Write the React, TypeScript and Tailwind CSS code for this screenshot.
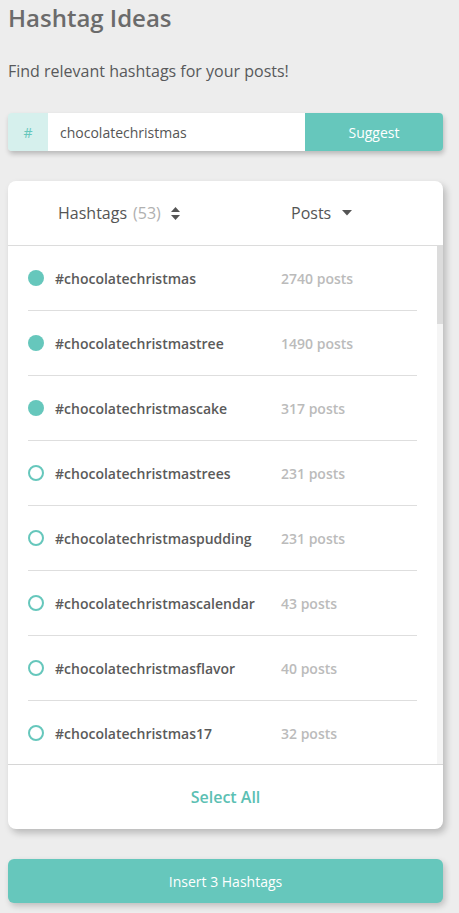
import * as React from "react";

type Tag = { name: string; posts: number; selected: boolean };

const known: Tag[] = [
  { name: "chocolatechristmas", posts: 2740, selected: true },
  { name: "chocolatechristmastree", posts: 1490, selected: true },
  { name: "chocolatechristmascake", posts: 317, selected: true },
  { name: "chocolatechristmastrees", posts: 231, selected: false },
  { name: "chocolatechristmaspudding", posts: 231, selected: false },
  { name: "chocolatechristmascalendar", posts: 43, selected: false },
  { name: "chocolatechristmasflavor", posts: 40, selected: false },
  { name: "chocolatechristmas17", posts: 32, selected: false },
];

const extra = [
  "chocolatechristmascookies", "chocolatechristmaslog", "chocolatechristmasgifts",
  "chocolatechristmasbox", "chocolatechristmasbark", "chocolatechristmastruffles",
  "chocolatechristmasdessert", "chocolatechristmasparty", "chocolatechristmascandy",
  "chocolatechristmaseve", "chocolatechristmasmorning", "chocolatechristmasfudge",
  "chocolatechristmassantas", "chocolatechristmasgift", "chocolatechristmasbaking",
  "chocolatechristmasmarket", "chocolatechristmaspud", "chocolatechristmastreat",
  "chocolatechristmastreats", "chocolatechristmasstar", "chocolatechristmasball",
  "chocolatechristmasballs", "chocolatechristmasbauble", "chocolatechristmaswreath",
  "chocolatechristmashouse", "chocolatechristmasdecor", "chocolatechristmasday",
  "chocolatechristmasnight", "chocolatechristmascupcake", "chocolatechristmascupcakes",
  "chocolatechristmasmousse", "chocolatechristmastart", "chocolatechristmaspie",
  "chocolatechristmaspresent", "chocolatechristmasstocking", "chocolatechristmaswish",
  "chocolatechristmaslove", "chocolatechristmasfun", "chocolatechristmas2017",
  "chocolatechristmasjoy", "chocolatechristmascheer", "chocolatechristmasmagic",
  "chocolatechristmassweets", "chocolatechristmasdrink", "chocolatechristmascocoa",
];

const tags: Tag[] = [
  ...known,
  ...extra.map((name, i) => ({ name, posts: Math.max(1, 30 - i), selected: false })),
];

function SortIcon() {
  return (
    <svg width="9" height="13" viewBox="0 0 9 13" className="ml-[10px]">
      <path d="M4.5 0 L9 5 H0 Z" fill="#555" />
      <path d="M4.5 13 L9 8 H0 Z" fill="#555" />
    </svg>
  );
}

function CaretDown() {
  return (
    <svg width="10" height="6" viewBox="0 0 10 6" className="ml-[11px]">
      <path d="M0 0 H10 L5 5.5 Z" fill="#555" />
    </svg>
  );
}

export default function App() {
  return (
    <div
      className="min-h-[913px] w-full bg-[#ededed] pl-2 pr-4 pb-4 text-[#555]"
      style={{ fontFamily: '"Open Sans", "Liberation Sans", sans-serif' }}
    >
      <h1 className="pt-[2px] text-[24px] font-semibold leading-[32px] text-[#6b6b6b]">
        Hashtag Ideas
      </h1>
      <p className="mt-[25px] text-[16px] leading-[24px] text-[#58595b]">
        Find relevant hashtags for your posts!
      </p>

      <div className="mt-[30px] flex h-[38px] overflow-hidden rounded-[4px] shadow-[1px_3px_5px_rgba(0,0,0,0.22)]">
        <div className="flex w-[40px] items-center justify-center bg-[#d6f0ed] text-[14px] text-[#66c7bc]">
          #
        </div>
        <div className="flex flex-1 items-center bg-white pl-3 text-[14px] text-[#555]">
          chocolatechristmas
        </div>
        <button className="w-[138px] bg-[#66c7bc] text-[14px] text-white">Suggest</button>
      </div>

      <div className="mt-[30px] overflow-hidden rounded-[8px] bg-white shadow-[3px_4px_7px_rgba(0,0,0,0.22)]">
        <div className="flex h-[65px] items-center border-b border-[#dcdcdc] text-[16px]">
          <div className="flex w-[283px] items-center pl-[50px]">
            <span className="text-[#555]">Hashtags</span>
            <span className="ml-[6px] text-[#b0b0b0]">(53)</span>
            <SortIcon />
          </div>
          <div className="flex items-center">
            <span className="text-[#555]">Posts</span>
            <CaretDown />
          </div>
        </div>

        <div className="flex h-[518px]">
          <div className="flex-1 overflow-hidden px-5">
            {tags.map((t, i) => (
              <div
                key={t.name + i}
                className="flex h-[65px] items-center border-b border-[#dedede] text-[14px] font-semibold"
              >
                <div className="flex w-[253px] items-center">
                  <span
                    className={
                      t.selected
                        ? "h-4 w-4 rounded-full bg-[#66c7bc]"
                        : "h-4 w-4 rounded-full border-2 border-[#66c7bc]"
                    }
                  />
                  <span className="ml-[11px] text-[#5a5a5a]">#{t.name}</span>
                </div>
                <span className="text-[#bbbbbb]">{t.posts} posts</span>
              </div>
            ))}
          </div>
          <div className="w-[6px] bg-[#f5f5f5]">
            <div className="h-[78px] bg-[#dcdcdc]" />
          </div>
        </div>

        <div className="flex h-[65px] items-center justify-center border-t border-[#d6d6d6] text-[16px] font-semibold text-[#5bbfb3]">
          Select All
        </div>
      </div>

      <button className="mt-[30px] h-[44px] w-full rounded-[6px] bg-[#66c7bc] text-[14px] text-white shadow-[2px_3px_6px_rgba(0,0,0,0.2)]">
        Insert 3 Hashtags
      </button>
    </div>
  );
}
